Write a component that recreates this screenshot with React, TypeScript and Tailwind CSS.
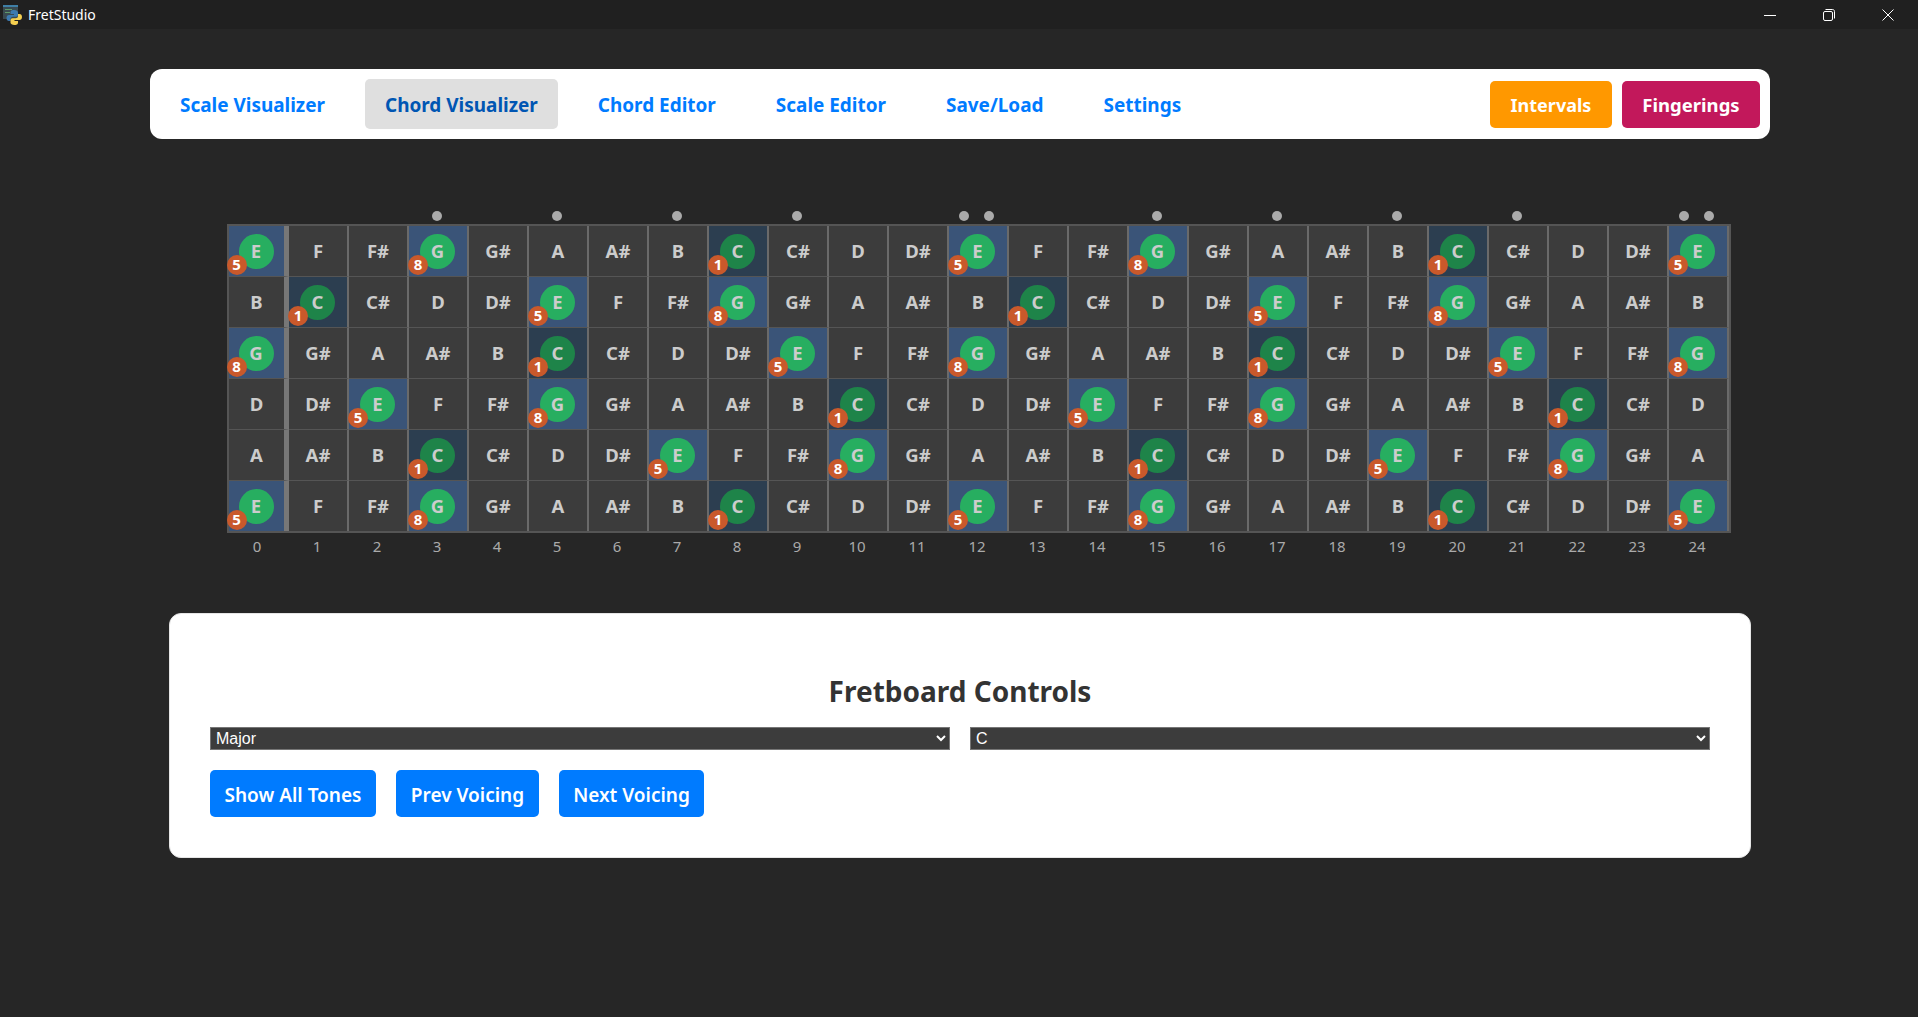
import React from 'react';

const CHROMATIC = ['C', 'C#', 'D', 'D#', 'E', 'F', 'F#', 'G', 'G#', 'A', 'A#', 'B'];
const STRINGS = [4, 11, 7, 2, 9, 4];
const FRETS = Array.from({ length: 25 }, (_, i) => i);
const SINGLE_DOTS = [3, 5, 7, 9, 15, 17, 19, 21];
const DOUBLE_DOTS = [12, 24];
const FINGERS: Record<string, string> = { C: '1', E: '5', G: '8' };

const UI_FONT = "font-['Noto_Sans',sans-serif]";

function PythonIcon() {
  return (
    <svg width="19" height="20" viewBox="0 0 19 20" className="shrink-0">
      <rect x="0" y="0" width="15" height="14" fill="#3a4a50" />
      <rect x="0" y="0" width="15" height="2" fill="#3f7fa6" />
      <rect x="2" y="4" width="7" height="1" fill="#5f9a6a" />
      <rect x="2" y="7" width="5" height="1" fill="#5f9a6a" />
      <path d="M11 5c-3 0-3.500 1.300-3.500 2.500V9H11v1H6c-1.500 0-2.500 1-2.500 3s1 3 2.500 3h1.500v-2c0-1.300 1-2.300 2.500-2.300h3c1.200 0 2-.9 2-2V7.500C15 6 13.500 5 11 5z" fill="#3d7ab0" />
      <path d="M11.500 20c3 0 3.500-1.300 3.500-2.500V16h-3.500v-1h5c1.500 0 2.500-1 2.500-3s-1-3-2.500-3H15v2c0 1.300-1 2.300-2.500 2.300h-3c-1.200 0-2 .9-2 2v2.200C7.500 19 9 20 11.500 20z" fill="#f5cf50" />
    </svg>
  );
}

function TitleBar() {
  return (
    <div className="flex h-[29px] items-center justify-between bg-[#202020] pl-[3px] pr-[1px] text-white">
      <div className="flex items-center gap-[6px] pt-[1px]">
        <PythonIcon />
        <span className={`${UI_FONT} text-[14px] leading-none`}>FretStudio</span>
      </div>
      <div className="flex items-center">
        <div className="flex h-[29px] w-[59px] items-center justify-center">
          <svg width="12" height="12" viewBox="0 0 12 12"><path d="M0 6.500h12" stroke="#fff" strokeWidth="1" /></svg>
        </div>
        <div className="flex h-[29px] w-[59px] items-center justify-center">
          <svg width="12" height="12" viewBox="0 0 12 12" fill="none" stroke="#fff" strokeWidth="1">
            <rect x="0.500" y="2.500" width="9" height="9" rx="1.500" />
            <path d="M2.500 .500h7c1.200 0 2 .8 2 2v7" />
          </svg>
        </div>
        <div className="flex h-[29px] w-[59px] items-center justify-center">
          <svg width="12" height="12" viewBox="0 0 12 12"><path d="M.5 .5l11 11M11.500 .5l-11 11" stroke="#fff" strokeWidth="1" /></svg>
        </div>
      </div>
    </div>
  );
}

function NavBar() {
  const tabs = ['Scale Visualizer', 'Chord Visualizer', 'Chord Editor', 'Scale Editor', 'Save/Load', 'Settings'];
  return (
    <nav className={`${UI_FONT} mx-[150px] mt-[40px] flex h-[70px] w-[1620px] items-center justify-between rounded-[12px] bg-white pl-[10px] pr-[10px]`}>
      <div className="flex items-center gap-5">
        {tabs.map((tab) => (
          <a
            key={tab}
            className={
              tab === 'Chord Visualizer'
                ? 'flex h-[50px] items-center rounded-[5px] bg-[#dfdfdf] px-5 pt-[2px] text-[18.95px] font-bold text-[#0056b3]'
                : 'flex h-[50px] items-center rounded-[5px] px-5 pt-[2px] text-[18.95px] font-bold text-[#007bff]'
            }
          >
            {tab}
          </a>
        ))}
      </div>
      <div className="flex items-center gap-[10px]">
        <button className="h-[47px] w-[122px] rounded-[5px] bg-[#ff9800] pt-[2px] text-[18px] font-bold text-white">Intervals</button>
        <button className="h-[47px] w-[138px] rounded-[5px] bg-[#c2185b] pt-[2px] text-[18.5px] font-bold text-white">Fingerings</button>
      </div>
    </nav>
  );
}

function FretCell({ note, fret, row }: { note: string; fret: number; row: number }) {
  const finger = FINGERS[note];
  const isRoot = note === 'C';
  const base = fret === 0 ? 'border-r-[5px] border-r-[#777777]' : 'border-r-2 border-r-[#6a6a6a]';
  const rowLine = row < 5 ? 'border-b border-b-[#555555]' : '';
  const bg = !finger ? 'bg-[#3c3c3c]' : isRoot ? 'bg-[#2c3e50]' : 'bg-[#3a5478]';

  return (
    <div className={`flex items-center justify-center text-[18.5px] font-bold text-[#cccccc] ${base} ${rowLine} ${bg}`}>
      {finger ? (
        <div className={`relative mr-[1px] flex h-[35px] w-[35px] items-center justify-center rounded-full ${isRoot ? 'bg-[#1e8449]' : 'bg-[#27ae60]'}`}>
          {note}
          <span className="absolute bottom-[-6px] left-[-12px] flex h-5 w-5 items-center justify-center rounded-full bg-[#c9592b] text-[15px] font-bold text-white">
            {finger}
          </span>
        </div>
      ) : (
        note
      )}
    </div>
  );
}

function Fretboard() {
  return (
    <div className={`${UI_FONT} ml-[227px] mt-[72px] w-[1504px]`}>
      <div className="grid h-[13px] grid-cols-[repeat(25,60px)]">
        {FRETS.map((fret) => (
          <div key={fret} className="flex h-[10px] items-center justify-center gap-[15px]">
            {SINGLE_DOTS.includes(fret) && <span className="h-[10px] w-[10px] rounded-full bg-[#aaaaaa]" />}
            {DOUBLE_DOTS.includes(fret) && (
              <>
                <span className="ml-[-2px] h-[10px] w-[10px] rounded-full bg-[#aaaaaa]" />
                <span className="h-[10px] w-[10px] rounded-full bg-[#aaaaaa]" />
              </>
            )}
          </div>
        ))}
      </div>
      <div className="grid grid-cols-[repeat(25,60px)] grid-rows-[repeat(5,51px)_50px] border-2 border-[#555555]">
        {STRINGS.map((open, row) =>
          FRETS.map((fret) => (
            <FretCell key={`${row}-${fret}`} note={CHROMATIC[(open + fret) % 12]} fret={fret} row={row} />
          )),
        )}
      </div>
      <div className="grid grid-cols-[repeat(25,60px)] pt-[3px]">
        {FRETS.map((fret) => (
          <span key={fret} className="text-center text-[15px] leading-[20px] text-[#aaaaaa]">{fret}</span>
        ))}
      </div>
    </div>
  );
}

function Controls() {
  const selectClass =
    "h-[23px] min-w-0 flex-1 border border-[#767676] bg-[#3c3c3c] pl-[1px] font-['Liberation_Sans',sans-serif] text-[16px] text-white";
  const buttonClass = 'h-[47px] rounded-[5px] bg-[#007bff] pt-[3px] text-[19px] font-semibold text-white';
  return (
    <section className={`${UI_FONT} ml-[169px] mt-[57px] h-[245px] w-[1582px] rounded-[12px] border border-[#e5e5e5] bg-white px-10 pt-[59px]`}>
      <h2 className="h-[54px] text-center text-[28px] leading-[36px] font-bold text-[#333333]">Fretboard Controls</h2>
      <div className="flex gap-5">
        <select className={selectClass} defaultValue="Major">
          <option>Major</option>
          <option>Minor</option>
        </select>
        <select className={selectClass} defaultValue="C">
          <option>C</option>
          <option>D</option>
        </select>
      </div>
      <div className="mt-5 flex gap-5">
        <button className={`${buttonClass} w-[166px]`}>Show All Tones</button>
        <button className={`${buttonClass} w-[143px]`}>Prev Voicing</button>
        <button className={`${buttonClass} w-[145px]`}>Next Voicing</button>
      </div>
    </section>
  );
}

export default function App() {
  return (
    <div className="h-[1017px] w-[1918px] overflow-hidden bg-[#262626]">
      <TitleBar />
      <NavBar />
      <Fretboard />
      <Controls />
    </div>
  );
}
